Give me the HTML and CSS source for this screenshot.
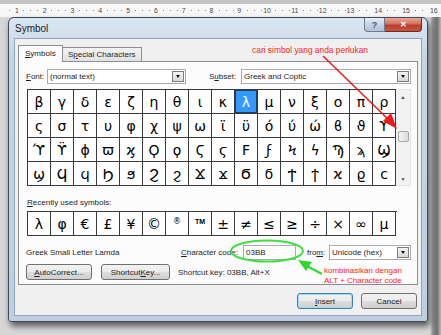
FILE: index.html
```html
<!DOCTYPE html>
<html lang="id">
<head>
    <meta charset="UTF-8">
    <title>Symbol</title>
    <link rel="stylesheet" href="styles.css">
</head>
<body>
<div class="desk">
    <div class="ruler">
        <div class="ruler-strip">
            <span>1</span><span>2</span><span>3</span><span>4</span><span>5</span><span>6</span><span>7</span><span>8</span>
            <span>9</span><span>10</span><span>11</span><span>12</span><span>13</span><span>14</span><span>15</span><span>16</span>
        </div>
    </div>

    <div class="window">
        <div class="titlebar">
            <span class="title">Symbol</span>
            <div class="caption-btns">
                <span class="cap-help">?</span>
                <span class="cap-close">&#10005;</span>
            </div>
        </div>

        <div class="client">
            <div class="tabs">
                <span class="tab active"><u>S</u>ymbols</span>
                <span class="tab">S<u>p</u>ecial Characters</span>
            </div>

            <div class="panel">
                <div class="font-row">
                    <span class="lbl-font"><u>F</u>ont:</span>
                    <div class="combo combo-font"><span>(normal text)</span><i class="drop"></i></div>
                    <span class="lbl-subset">S<u>u</u>bset:</span>
                    <div class="combo combo-subset"><span>Greek and Coptic</span><i class="drop"></i></div>
                </div>

                <div class="charbox">
                    <div class="grid">
                        <span>β</span><span>γ</span><span>δ</span><span>ε</span><span>ζ</span><span>η</span><span>θ</span><span>ι</span>
                        <span>κ</span><span class="sel">λ</span><span>μ</span><span>ν</span><span>ξ</span><span>ο</span><span>π</span><span>ρ</span>
                        <span>ς</span><span>σ</span><span>τ</span><span>υ</span><span>φ</span><span>χ</span><span>ψ</span><span>ω</span>
                        <span>ϊ</span><span>ϋ</span><span>ό</span><span>ύ</span><span>ώ</span><span>ϐ</span><span>ϑ</span><span>ϒ</span>
                        <span>ϓ</span><span>ϔ</span><span>ϕ</span><span>ϖ</span><span>ϗ</span><span>Ϙ</span><span>ϙ</span><span>Ϛ</span>
                        <span>ϛ</span><span>Ϝ</span><span>ϝ</span><span>Ϟ</span><span>ϟ</span><span>Ϡ</span><span>ϡ</span><span>Ϣ</span>
                        <span>ϣ</span><span>Ϥ</span><span>ϥ</span><span>Ϧ</span><span>ϧ</span><span>Ϩ</span><span>ϩ</span><span>Ϫ</span>
                        <span>ϫ</span><span>Ϭ</span><span>ϭ</span><span>Ϯ</span><span>ϯ</span><span>ϰ</span><span>ϱ</span><span>ϲ</span>
                    </div>
                    <div class="vscroll">
                        <span class="arr">&#9650;</span>
                        <span class="thumb"></span>
                        <span class="arr arr-down">&#9660;</span>
                    </div>
                </div>

                <div class="lbl-recent"><u>R</u>ecently used symbols:</div>
                <div class="recent">
                    <span>λ</span><span>φ</span><span>€</span><span>£</span><span>¥</span><span>©</span><span class="tiny">®</span><span class="tiny tm">TM</span>
                    <span>±</span><span>≠</span><span>≤</span><span>≥</span><span>÷</span><span>×</span><span>∞</span><span>µ</span>
                </div>

                <div class="info-row">
                    <span class="char-name">Greek Small Letter Lamda</span>
                    <span class="lbl-code"><u>C</u>haracter code:</span>
                    <div class="code-input">03BB</div>
                    <span class="lbl-from">fro<u>m</u>:</span>
                    <div class="combo combo-from"><span>Unicode (hex)</span><i class="drop"></i></div>
                </div>

                <div class="btn-row">
                    <span class="btn btn-auto"><u>A</u>utoCorrect...</span>
                    <span class="btn btn-key">Shortcut <u>K</u>ey...</span>
                    <span class="shortcut-text">Shortcut key: 03BB, Alt+X</span>
                </div>
            </div>

            <div class="footer">
                <span class="btn btn-insert"><u>I</u>nsert</span>
                <span class="btn">Cancel</span>
            </div>
        </div>
    </div>

    <!-- annotations drawn over the screenshot -->
    <svg class="notes" width="441" height="335" viewBox="0 0 441 335">
        <text class="note-red note-top" x="310" y="53" text-anchor="middle">cari simbol yang anda perlukan</text>
        <line x1="323" y1="56" x2="391" y2="122" stroke="#f01818" stroke-width="1.5"/>
        <polygon points="397,129 383,121 391,113" fill="#f01818"/>

        <ellipse cx="267" cy="251" rx="36" ry="10.5" fill="none" stroke="#3ee03e" stroke-width="2"/>
        <line x1="322" y1="274" x2="305" y2="265" stroke="#2fd82f" stroke-width="2"/>
        <polygon points="298,260 312,262 306,271" fill="#2fd82f"/>
        <text class="note-red" x="324" y="273">kombinasikan dengan</text>
        <text class="note-red" x="324" y="282.5">ALT + Character code</text>
    </svg>
</div>
</body>
</html>
```

FILE: styles.css
```css
body {
    margin: 0;
    font-family: "Liberation Sans", Arial, sans-serif;
    font-size: 8px;
    color: #1e1e1e;
}
u { text-decoration: underline; }

.desk {
    position: relative;
    width: 441px;
    height: 335px;
    overflow: hidden;
    background: linear-gradient(90deg, #d6d6d6 0, #d6d6d6 430px, #8c8c8c 433px, #6f6f6f 437px, #b9b9b9 441px);
}

/* Word ruler behind the dialog */
.ruler {
    height: 17px;
    padding-top: 4px;
    box-sizing: border-box;
    background: #c4c4c4;
}
.ruler-strip {
    height: 13px;
    display: grid;
    grid-template-columns: repeat(16, 27.8px);
    padding-left: 3px;
    align-items: center;
    justify-items: center;
    font-size: 7px;
    color: #4c4c4c;
    background:
        repeating-linear-gradient(90deg, transparent 0 6px, #8a8a8a 6px 7px) 3px 6px / 100% 1px no-repeat,
        #f7f7f7;
}
.ruler-strip span {
    background: #f7f7f7;
    padding: 0 1px;
    line-height: 9px;
}

/* dialog window */
.window {
    margin-left: 8px;
    width: 420px;
    height: 305px;
    box-sizing: border-box;
    border: 1px solid #3c4a59;
    border-radius: 6px 6px 3px 3px;
    padding: 0 5px 5px;
    background: linear-gradient(#dbe6f2, #c4d4e5 40px, #bfcfe1);
    box-shadow: 2px 4px 6px rgba(0,0,0,0.6);
    display: flex;
    flex-direction: column;
}
.titlebar {
    height: 20px;
    display: flex;
    justify-content: space-between;
    align-items: flex-start;
}
.title {
    font-size: 10px;
    padding: 5px 0 0 1px;
    color: #1a1a1a;
}
.caption-btns {
    display: flex;
}
.cap-help, .cap-close {
    height: 13px;
    display: flex;
    align-items: center;
    justify-content: center;
    font-weight: bold;
}
.cap-help {
    width: 19px;
    border: 1px solid #6b7c8e;
    border-top: none;
    border-radius: 0 0 0 4px;
    background: linear-gradient(#e6edf5, #c5d3e2 50%, #b3c4d6);
    color: #4a5665;
    font-size: 9px;
}
.cap-close {
    width: 36px;
    border: 1px solid #6b2b24;
    border-top: none;
    border-left: none;
    border-radius: 0 0 4px 0;
    background: linear-gradient(#eaa899, #d0715e 45%, #bd3c2a 55%, #c9563f);
    color: #fff;
    font-size: 8px;
}

.client {
    flex: 1;
    background: #f0f0f0;
    border: 1px solid #91a6bc;
    display: flex;
    flex-direction: column;
}

/* tabs */
.tabs {
    display: flex;
    align-items: flex-end;
    margin: 6px 0 0 3px;
    height: 16px;
}
.tab {
    height: 13px;
    padding: 0 5px;
    border: 1px solid #8c8e94;
    border-bottom: none;
    background: linear-gradient(#f3f3f3, #e2e2e2);
    display: flex;
    align-items: center;
}
.tab.active {
    height: 15px;
    width: 37px;
    background: #fcfcfc;
    margin-bottom: -1px;
    position: relative;
    z-index: 1;
    padding: 0 0 1px 6px;
}
.tab + .tab { border-left: none; width: 68px; }

.panel {
    margin: 0 3px 0 3px;
    height: 224px;
    box-sizing: border-box;
    border: 1px solid #8c8e94;
    background: #fcfcfc;
    padding: 7px 5px 0 8px;
}

/* combos and inputs */
.font-row, .info-row {
    display: flex;
    align-items: center;
    height: 15px;
}
.combo {
    height: 15px;
    box-sizing: border-box;
    border: 1px solid #a9abb2;
    background: #fff;
    display: flex;
    align-items: center;
    justify-content: space-between;
    padding-left: 2px;
}
.drop {
    width: 12px;
    height: 11px;
    margin-right: 1px;
    box-sizing: border-box;
    border: 1px solid #7d7d7d;
    background: linear-gradient(#f4f4f4, #d8d8d8);
    position: relative;
}
.drop::after {
    content: "";
    position: absolute;
    left: 3px;
    top: 3px;
    border-left: 2.5px solid transparent;
    border-right: 2.5px solid transparent;
    border-top: 3px solid #111;
}
.lbl-font { width: 21px; margin-left: -1px; }
.combo-font { width: 139px; }
.lbl-subset { margin-left: 23px; width: 32px; }
.combo-subset { width: 170px; }

/* character map */
.charbox {
    display: flex;
    margin-top: 5px;
}
.grid, .recent {
    display: grid;
    grid-template-columns: repeat(16, 23px);
    border-top: 1px solid #3a3a3a;
    border-left: 1px solid #3a3a3a;
    background: #fff;
    font-family: "DejaVu Sans", "Noto Sans", sans-serif;
    font-size: 14px;
    color: #000;
}
.grid { grid-auto-rows: 24px; }
.grid span, .recent span {
    border-right: 1px solid #3a3a3a;
    border-bottom: 1px solid #3a3a3a;
    display: flex;
    align-items: center;
    justify-content: center;
}
.grid .sel {
    background: #3399ff;
    color: #fff;
    box-shadow: inset 0 0 0 1px #1b3d63;
}
.vscroll {
    width: 15px;
    height: 97px;
    box-sizing: border-box;
    background: #f2f2f2;
    border: 1px solid #e4e4e4;
    border-left: none;
    display: flex;
    flex-direction: column;
    align-items: center;
    padding: 4px 0 3px;
    font-size: 5px;
    color: #444;
}
.thumb {
    width: 11px;
    height: 11px;
    margin-top: 31px;
    box-sizing: border-box;
    border: 1px solid #a6a6a6;
    border-radius: 2px;
    background: linear-gradient(90deg, #f6f6f6, #dcdcdc);
}
.arr-down { margin-top: auto; }

.lbl-recent {
    margin-top: 10px;
    height: 13px;
    line-height: 13px;
}
.recent {
    margin-top: 2px;
    grid-auto-rows: 24px;
    width: 369px;
}
.recent .tiny {
    font-size: 8px;
    align-items: flex-start;
    padding-top: 5px;
}
.recent .tm {
    font-family: "Liberation Sans", Arial, sans-serif;
    font-weight: bold;
    font-size: 7px;
    padding-top: 6px;
}

.info-row { margin-top: 9px; }
.char-name { width: 155px; margin-left: -1px; }
.lbl-code { width: 62px; }
.code-input {
    width: 53px;
    height: 15px;
    box-sizing: border-box;
    border: 1px solid #a9abb2;
    background: #fff;
    padding-left: 2px;
    line-height: 13px;
}
.lbl-from { margin-left: 11px; width: 22px; }
.combo-from { width: 82px; }

/* buttons */
.btn-row {
    display: flex;
    align-items: center;
    margin-top: 4px;
    margin-left: -1px;
}
.btn {
    height: 16px;
    box-sizing: border-box;
    border: 1px solid #707070;
    border-radius: 3px;
    background: linear-gradient(#f2f2f2 0, #ebebeb 50%, #dddddd 51%, #cfcfcf);
    display: flex;
    align-items: center;
    justify-content: center;
    width: 56px;
}
.btn-auto { width: 66px; }
.btn-key { width: 69px; margin-left: 9px; }
.shortcut-text { margin-left: 8px; }

.footer {
    display: flex;
    justify-content: flex-end;
    gap: 8px;
    margin-top: 8px;
    padding-right: 4px;
}
.btn-insert {
    border-color: #3c7fb1;
    box-shadow: inset 0 0 0 1px #9fdaf7;
}

/* annotations */
.notes {
    position: absolute;
    left: 0;
    top: 0;
    pointer-events: none;
}
.note-red {
    font-family: "Liberation Sans", Arial, sans-serif;
    font-size: 8px;
    fill: #ff2323;
}
.note-top { font-size: 8.4px; }
```
